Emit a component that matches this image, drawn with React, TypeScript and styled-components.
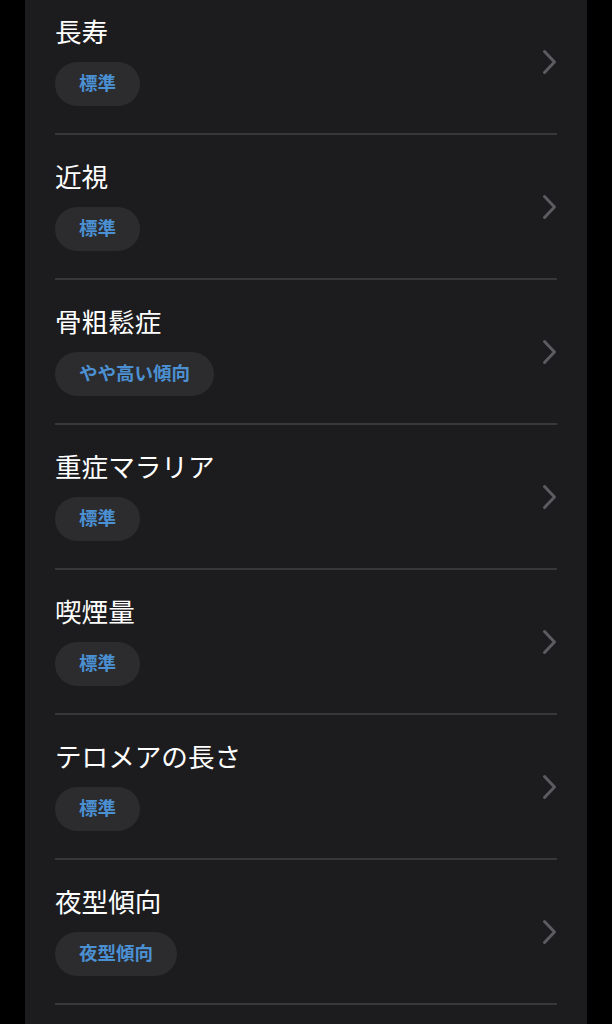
import React from "react";
import styled, { createGlobalStyle } from "styled-components";

const GlobalStyle = createGlobalStyle`
  html, body {
    margin: 0;
    padding: 0;
    background: #000;
    overflow: hidden;
  }
  body {
    font-family: "Noto Sans CJK JP", "Noto Sans", sans-serif;
    -webkit-font-smoothing: antialiased;
  }
`;

const Page = styled.div`
  display: flex;
  justify-content: center;
  height: 1024px;
  overflow: hidden;
  background: #000;
`;

const Panel = styled.div`
  width: 562px;
  background: #1c1c1e;
  padding: 0 30px;
  box-sizing: border-box;
`;

const List = styled.ul`
  list-style: none;
  margin: -10px 0 0;
  padding: 0;
`;

const Row = styled.li`
  display: flex;
  align-items: center;
  justify-content: space-between;
  padding: 25px 0 27px;
  border-bottom: 2px solid #38383b;
`;

const Info = styled.div`
  display: flex;
  flex-direction: column;
  align-items: flex-start;
  gap: 15px;
`;

const Title = styled.div`
  font-size: 26.6px;
  line-height: 32px;
  color: #ffffff;
  font-weight: 400;
`;

const Badge = styled.span`
  display: inline-flex;
  align-items: center;
  box-sizing: border-box;
  height: 44px;
  padding: 0 24px 3px;
  border-radius: 22px;
  background: #2c2c2e;
  color: #4b90d2;
  font-size: 18.5px;
  font-weight: 700;
  line-height: 1;
`;

const Chevron = styled.svg`
  flex: none;
  width: 15px;
  height: 26px;
  margin-top: 2px;
`;

const items: { title: string; badge: string }[] = [
  { title: "長寿", badge: "標準" },
  { title: "近視", badge: "標準" },
  { title: "骨粗鬆症", badge: "やや高い傾向" },
  { title: "重症マラリア", badge: "標準" },
  { title: "喫煙量", badge: "標準" },
  { title: "テロメアの長さ", badge: "標準" },
  { title: "夜型傾向", badge: "夜型傾向" },
];

export default function App() {
  return (
    <>
      <GlobalStyle />
      <Page>
        <Panel>
          <List>
            {items.map((it) => (
              <Row key={it.title}>
                <Info>
                  <Title>{it.title}</Title>
                  <Badge>{it.badge}</Badge>
                </Info>
                <Chevron viewBox="0 0 15 26">
                  <polyline
                    points="2.5,2.5 12.5,13 2.5,23.5"
                    fill="none"
                    stroke="#5c5c60"
                    strokeWidth="3"
                    strokeLinecap="round"
                    strokeLinejoin="round"
                  />
                </Chevron>
              </Row>
            ))}
          </List>
        </Panel>
      </Page>
    </>
  );
}
